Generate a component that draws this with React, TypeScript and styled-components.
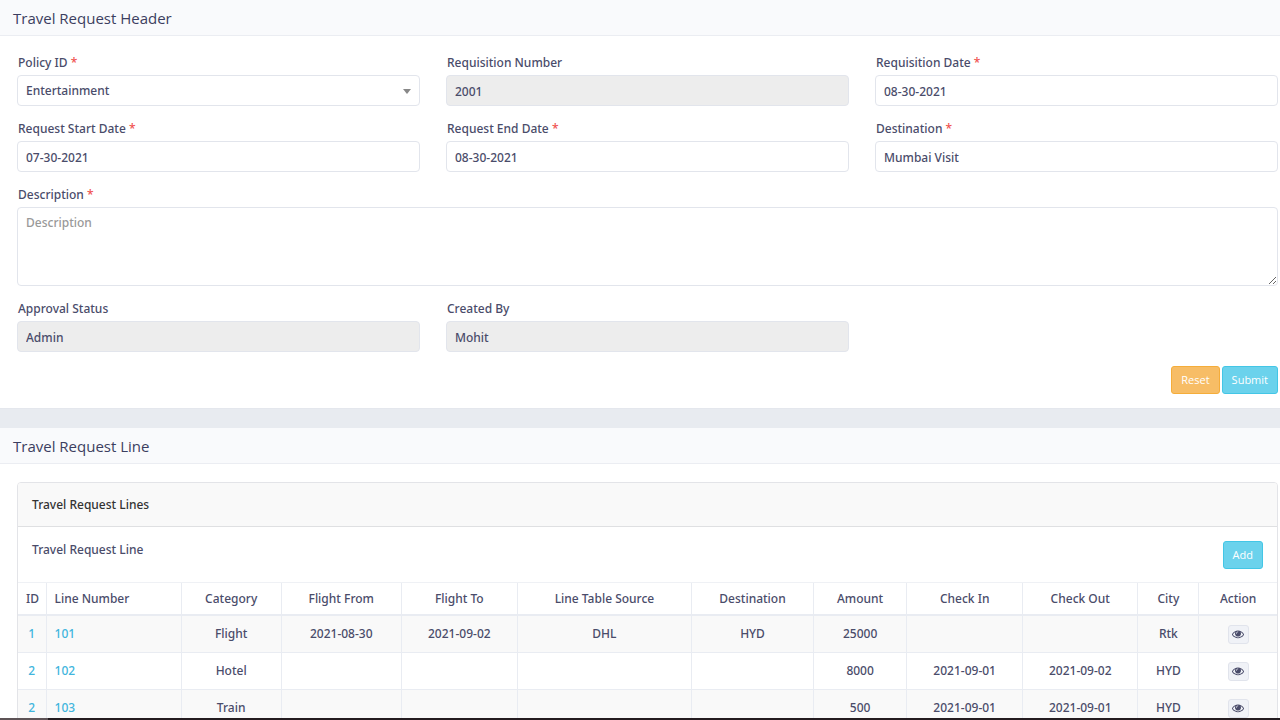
import React from "react";
import styled, { createGlobalStyle, css } from "styled-components";

const ink = "#4a4c6a";
const line = "#e4e7ed";
const headingFont = `"Open Sans", "Noto Sans", sans-serif`;

const GlobalStyle = createGlobalStyle`
  *, *::before, *::after { box-sizing: border-box; }
  body {
    margin: 0;
    background: #e8ebf0;
    color: ${ink};
    font-family: "Noto Sans", "Open Sans", sans-serif;
    font-size: 12px;
    font-weight: 500;
    line-height: 18px;
  }
  input, select, textarea, button { font: inherit; color: inherit; margin: 0; }
`;

const Page = styled.main`
  display: flex;
  flex-direction: column;
  gap: 19px;
  height: 100vh;
  overflow: hidden;
`;

const Panel = styled.section`
  flex: none;
  background: #fff;
  border-bottom: 1px solid ${line};
`;

const PanelHeader = styled.header`
  height: 36px;
  padding: 0 13px;
  display: flex;
  align-items: center;
  background: #f9fafc;
  border-bottom: 1px solid #ebedf2;
`;

const PanelTitle = styled.h2`
  margin: 0;
  color: #3c3e60;
  font-family: ${headingFont};
  font-size: 15px;
  line-height: 20px;
  font-weight: 500;
`;

const Form = styled.form`
  padding: 18px 2px 14px 17px;
`;

const Fields = styled.div`
  display: grid;
  grid-template-columns: repeat(3, 1fr);
  gap: 14px 26px;
`;

const Field = styled.div<{ $wide?: boolean }>`
  display: flex;
  flex-direction: column;
  gap: 3px;
  ${(p) => p.$wide && "grid-column: 1 / -1;"}
`;

const Label = styled.label`
  padding-left: 1px;
`;

const Required = styled.span`
  color: #f0524f;
`;

const control = css`
  width: 100%;
  padding: 0 8px;
  border: 1px solid #e2e5ec;
  border-radius: 4px;
  background: #fff;
  outline: none;
`;

const Input = styled.input`
  ${control}
  height: 31px;
  padding-top: 1px;
  &:disabled {
    background: #ededed;
    color: ${ink};
  }
`;

const SelectWrap = styled.div`
  position: relative;
  &::after {
    content: "";
    position: absolute;
    right: 9px;
    top: 14px;
    border: 4px solid transparent;
    border-top: 5px solid #888;
    border-bottom: 0;
    pointer-events: none;
  }
`;

const Select = styled.select`
  ${control}
  display: block;
  height: 31px;
  padding-top: 1px;
  appearance: none;
`;

const TextArea = styled.textarea`
  ${control}
  display: block;
  height: 79px;
  padding: 6px 8px;
  resize: vertical;
  &::placeholder { color: #999; opacity: 1; }
`;

const Actions = styled.div`
  display: flex;
  justify-content: flex-end;
  gap: 2px;
  margin-top: 14px;
`;

const Button = styled.button<{ $tone: "info" | "warning" }>`
  height: 28px;
  padding: 0 9px;
  border-radius: 3px;
  color: #fff;
  font-family: ${headingFont};
  font-size: 11px;
  font-weight: 500;
  border: 1px solid ${(p) => (p.$tone === "info" ? "#43c6e6" : "#f5ad3a")};
  background: ${(p) => (p.$tone === "info" ? "#6bd2ec" : "#f7bd66")};
`;

const PanelBody = styled.div`
  padding: 18px 2px 18px 17px;
`;

const Card = styled.div`
  border: 1px solid #e3e4e8;
  border-radius: 4px;
  overflow: hidden;
`;

const CardHeader = styled.div`
  height: 44px;
  padding: 0 14px;
  display: flex;
  align-items: center;
  background: #f9f9f9;
  border-bottom: 1px solid #dfe0e2;
  color: #333;
`;

const Toolbar = styled.div`
  display: flex;
  justify-content: space-between;
  align-items: flex-start;
  padding: 14px 14px 13px;
`;

const ToolbarTitle = styled.h3`
  margin: 0;
  font-size: 12px;
  font-weight: 500;
`;

const Table = styled.table`
  width: 100%;
  table-layout: fixed;
  border-collapse: collapse;
  border-style: hidden;
`;

const Cell = styled.td<{ $left?: boolean }>`
  height: 37px;
  padding: 1px 8px 0;
  border: 1px solid #e9ecf2;
  text-align: ${(p) => (p.$left ? "left" : "center")};
  vertical-align: middle;
  white-space: nowrap;
`;

const HeadCell = styled(Cell)`
  height: 32px;
  font-weight: 500;
  border-top: 1px solid #eff1f5;
  border-bottom: 2px solid #e9ecf2;
`;

const Row = styled.tr`
  &:nth-child(odd) { background: #f9f9f9; }
`;

const Accent = styled.span`
  color: #41b5dd;
`;

const LineLink = styled.a`
  color: #41b5dd;
  text-decoration: none;
`;

const TableFrame = styled.div`
  border-top: 1px solid #eff1f5;
`;

const IconButton = styled.button`
  display: inline-flex;
  align-items: center;
  justify-content: center;
  width: 21px;
  height: 19px;
  padding: 0;
  vertical-align: middle;
  border: 1px solid #e1e4ec;
  border-radius: 3px;
  background: #f0f2f7;
`;

const BottomEdge = styled.div`
  position: fixed;
  left: 0;
  right: 0;
  bottom: 0;
  height: 2px;
  background: #241c20;
  border-left: 48px solid #5d5356;
`;

const EyeIcon = () => (
  <svg width="12" height="12" viewBox="0 0 1792 1792" fill="currentColor" aria-hidden="true">
    <path d="M1664 960q-152-236-381-353 61 104 61 225 0 185-131.5 316.5t-316.5 131.5-316.5-131.5-131.5-316.5q0-121 61-225-229 117-381 353 133 205 333.5 326.5t434.5 121.5 434.5-121.5 333.5-326.5zm-720-384q0-20-14-34t-34-14q-125 0-214.5 89.5t-89.5 214.5q0 20 14 34t34 14 34-14 14-34q0-86 61-147t147-61q20 0 34-14t14-34zm848 384q0 34-20 69-140 230-376.5 368.5t-499.5 138.5-499.5-139-376.5-368q-20-35-20-69t20-69q140-229 376.5-368t499.5-139 499.5 139 376.5 368q20 35 20 69z" />
  </svg>
);

type TextFieldProps = { id: string; label: string; value: string; required?: boolean; disabled?: boolean };

const TextField = ({ id, label, value, required, disabled }: TextFieldProps) => (
  <Field>
    <Label htmlFor={id}>
      {label} {required && <Required>*</Required>}
    </Label>
    <Input id={id} type="text" defaultValue={value} disabled={disabled} />
  </Field>
);

const columns: [string, number][] = [
  ["ID", 28],
  ["Line Number", 135],
  ["Category", 100],
  ["Flight From", 120],
  ["Flight To", 116],
  ["Line Table Source", 174],
  ["Destination", 122],
  ["Amount", 93],
  ["Check In", 116],
  ["Check Out", 115],
  ["City", 61],
  ["Action", 78],
];

const Col = styled.col<{ $w: number }>`
  width: ${(p) => p.$w}px;
`;

const rows: string[][] = [
  ["1", "101", "Flight", "2021-08-30", "2021-09-02", "DHL", "HYD", "25000", "", "", "Rtk"],
  ["2", "102", "Hotel", "", "", "", "", "8000", "2021-09-01", "2021-09-02", "HYD"],
  ["2", "103", "Train", "", "", "", "", "500", "2021-09-01", "2021-09-01", "HYD"],
];

export default function App() {
  return (
    <>
      <GlobalStyle />
      <Page>
        <Panel>
          <PanelHeader>
            <PanelTitle>Travel Request Header</PanelTitle>
          </PanelHeader>
          <Form onSubmit={(e) => e.preventDefault()}>
            <Fields>
              <Field>
                <Label htmlFor="policy">
                  Policy ID <Required>*</Required>
                </Label>
                <SelectWrap>
                  <Select id="policy" defaultValue="Entertainment">
                    <option>Entertainment</option>
                  </Select>
                </SelectWrap>
              </Field>
              <TextField id="reqno" label="Requisition Number" value="2001" disabled />
              <TextField id="reqdate" label="Requisition Date" value="08-30-2021" required />
              <TextField id="start" label="Request Start Date" value="07-30-2021" required />
              <TextField id="end" label="Request End Date" value="08-30-2021" required />
              <TextField id="destination" label="Destination" value="Mumbai Visit" required />
              <Field $wide>
                <Label htmlFor="description">
                  Description <Required>*</Required>
                </Label>
                <TextArea id="description" placeholder="Description" />
              </Field>
              <TextField id="approval" label="Approval Status" value="Admin" disabled />
              <TextField id="creator" label="Created By" value="Mohit" disabled />
            </Fields>
            <Actions>
              <Button type="reset" $tone="warning">Reset</Button>
              <Button type="submit" $tone="info">Submit</Button>
            </Actions>
          </Form>
        </Panel>

        <Panel>
          <PanelHeader>
            <PanelTitle>Travel Request Line</PanelTitle>
          </PanelHeader>
          <PanelBody>
            <Card>
              <CardHeader>Travel Request Lines</CardHeader>
              <Toolbar>
                <ToolbarTitle>Travel Request Line</ToolbarTitle>
                <Button type="button" $tone="info">Add</Button>
              </Toolbar>
              <TableFrame>
                <Table>
                  <colgroup>
                    {columns.map(([name, w]) => (
                      <Col key={name} $w={w} />
                    ))}
                  </colgroup>
                  <thead>
                    <tr>
                      {columns.map(([name], i) => (
                        <HeadCell as="th" scope="col" key={name} $left={i === 1}>
                          {name}
                        </HeadCell>
                      ))}
                    </tr>
                  </thead>
                  <tbody>
                    {rows.map((row) => (
                      <Row key={row[1]}>
                        {row.map((value, i) => (
                          <Cell key={i} $left={i === 1}>
                            {i === 0 ? <Accent>{value}</Accent> : i === 1 ? <LineLink href="#">{value}</LineLink> : value}
                          </Cell>
                        ))}
                        <Cell>
                          <IconButton type="button" aria-label={`View line ${row[1]}`}>
                            <EyeIcon />
                          </IconButton>
                        </Cell>
                      </Row>
                    ))}
                  </tbody>
                </Table>
              </TableFrame>
            </Card>
          </PanelBody>
        </Panel>
      </Page>
      <BottomEdge />
    </>
  );
}
